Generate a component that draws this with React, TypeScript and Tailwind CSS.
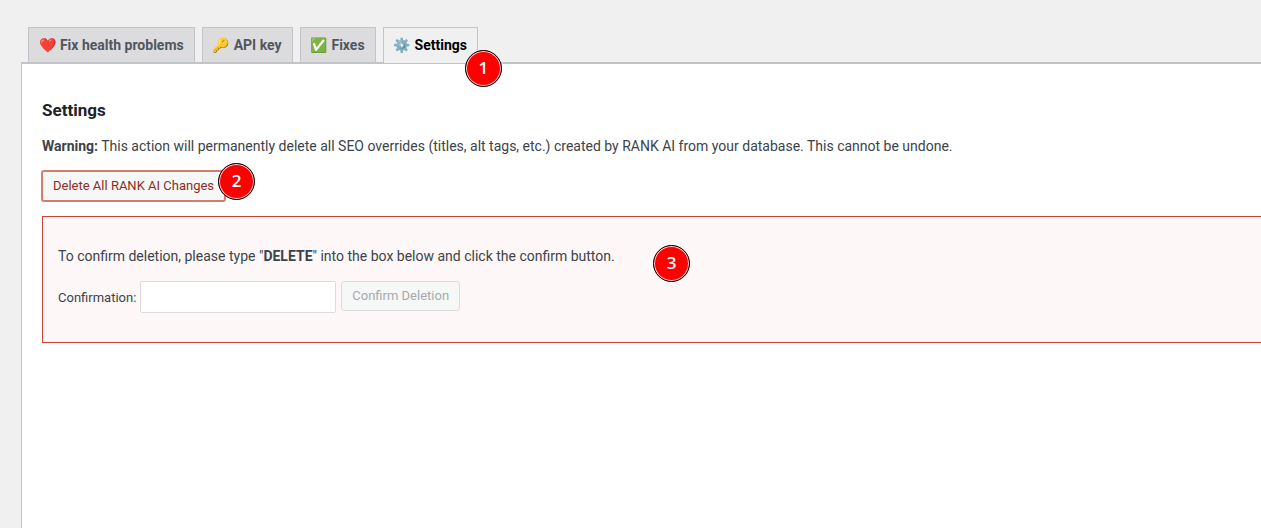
import { useState } from 'react';
import clsx from 'clsx';

const TABS = [
  { id: 'health', icon: '❤️', label: 'Fix health problems' },
  { id: 'api-key', icon: '🔑', label: 'API key' },
  { id: 'fixes', icon: '✅', label: 'Fixes' },
  { id: 'settings', icon: '⚙️', label: 'Settings' },
];

function StepBadge({ step, className }: { step: number; className: string }) {
  return (
    <span
      className={clsx(
        'absolute z-10 flex size-[37px] items-center justify-center rounded-full border border-black bg-[#ff0000] pb-0.5 font-["Open_Sans",sans-serif] text-[17px] leading-6 font-semibold text-white ring-1 ring-white/80 ring-inset',
        className
      )}
    >
      {step}
    </span>
  );
}

export default function App() {
  const [activeTab, setActiveTab] = useState('settings');
  const [confirmation, setConfirmation] = useState('');

  return (
    <div className="flex min-h-screen flex-col bg-[#f0f0f1] pt-[27px] pl-[21px] font-[Roboto,'Noto_Color_Emoji',sans-serif] text-[13px] text-[#3c434a]">
      {/* Tabs */}
      <nav className="flex gap-[7px] border-b border-[#c3c4c7] pl-[7px]">
        {TABS.map((tab) => (
          <a
            key={tab.id}
            href={`#${tab.id}`}
            onClick={() => setActiveTab(tab.id)}
            className={clsx(
              'relative border border-b-0 border-[#c3c4c7] px-2.5 py-[5px] text-sm leading-6 font-bold whitespace-nowrap',
              activeTab === tab.id
                ? '-mb-px bg-[#f0f0f1] pb-1.5 text-black'
                : 'bg-[#dcdcde] text-[#50575e]'
            )}
          >
            {tab.icon} {tab.label}
            {tab.id === 'settings' && <StepBadge step={1} className="top-[22px] -right-[25px]" />}
          </a>
        ))}
      </nav>

      <main className="flex-1 border-t border-l border-[#c3c4c7] bg-white pt-[34px] pb-9 pl-5">
        <h2 className="text-[17px] leading-6 font-bold text-[#1d2327]">Settings</h2>
        <p className="mt-3 text-sm leading-6">
          <strong>Warning:</strong> This action will permanently delete all SEO overrides (titles, alt tags, etc.)
          created by RANK AI from your database. This cannot be undone.
        </p>

        <div className="relative mt-3 w-fit">
          <button
            type="button"
            className="-ml-px h-8 rounded-[3px] border-2 border-[#d97a70] bg-[#f6f7f7] px-2.5 text-[#8f2d22]"
          >
            Delete All RANK AI Changes
          </button>
          <StepBadge step={2} className="-top-[7px] -right-[29px]" />
        </div>

        {/* Confirmation box */}
        <section className="relative mt-3.5 border border-r-0 border-[#cc4036] bg-[#fdf7f7] px-[15px] pt-[27px] pb-7">
          <p className="text-sm leading-6">
            To confirm deletion, please type "<strong>DELETE</strong>" into the box below and click the confirm button.
          </p>
          <div className="mt-[13px] flex items-start">
            <label htmlFor="confirmation" className="mr-1 leading-[33px]">
              Confirmation:
            </label>
            <input
              id="confirmation"
              type="text"
              value={confirmation}
              onChange={(e) => setConfirmation(e.target.value)}
              className="mr-[5px] h-8 w-[196px] rounded-xs border border-[#dcdcde] bg-white px-2 text-sm"
            />
            <button
              type="button"
              disabled={confirmation !== 'DELETE'}
              className="h-[30px] rounded-[3px] border border-[#2271b1] bg-[#f6f7f7] px-2.5 text-[#2271b1] disabled:border-[#dcdcde] disabled:text-[#a7aaad]"
            >
              Confirm Deletion
            </button>
          </div>
          <StepBadge step={3} className="top-7 left-[610px]" />
        </section>
      </main>
    </div>
  );
}
